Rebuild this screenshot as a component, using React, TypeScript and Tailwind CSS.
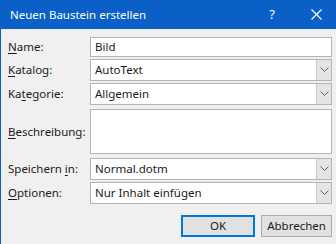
import React from "react";

const font = { fontFamily: '"Noto Sans", "Open Sans", sans-serif' };

function Label({ pre, u, post }: { pre: string; u: string; post: string }) {
  return (
    <div className="w-[82px] shrink-0 text-[11.5px] text-[#1a1a1a]">
      {pre}
      <span className="underline underline-offset-2">{u}</span>
      {post}
    </div>
  );
}

function Chevron() {
  return (
    <svg width="9" height="6" viewBox="0 0 9 6">
      <path d="M0.5 0.5 L4.5 4.5 L8.5 0.5" fill="none" stroke="#606060" strokeWidth="1" />
    </svg>
  );
}

function Combo({ value }: { value: string }) {
  return (
    <div className="flex h-[22px] flex-1 items-stretch border border-[#b4b4b4] bg-white">
      <div className="flex flex-1 items-center pl-[4px] text-[11.5px] text-[#1a1a1a]">{value}</div>
      <div className="flex w-[15px] items-center justify-center border-l border-[#c8c8c8] bg-[#e4e4e4]">
        <Chevron />
      </div>
    </div>
  );
}

export default function App() {
  return (
    <div className="flex h-[244px] w-[336px] flex-col overflow-hidden bg-[#f0f0f0]" style={font}>
      <div className="flex h-[29px] shrink-0 items-center bg-[#0a60c6] pl-[10px] pr-[14px] text-white">
        <div className="flex-1 text-[11.5px]">Neuen Baustein erstellen</div>
        <div className="mr-[36px] text-[13px]">?</div>
        <svg width="11" height="11" viewBox="0 0 11 11">
          <path d="M0.5 0.5 L10.5 10.5 M10.5 0.5 L0.5 10.5" stroke="white" strokeWidth="1.2" />
        </svg>
      </div>

      <div className="flex flex-1 flex-col border-l border-[#0a60c6] pl-[7px] pr-[4px]">
        <div className="mt-[8px] flex items-center">
          <Label pre="" u="N" post="ame:" />
          <div className="flex h-[20px] flex-1 items-center border border-[#b4b4b4] bg-white pl-[4px] text-[11.5px] text-[#1a1a1a]">
            Bild
          </div>
        </div>

        <div className="mt-[2px] flex items-center">
          <Label pre="" u="K" post="atalog:" />
          <Combo value="AutoText" />
        </div>

        <div className="mt-[2px] flex items-center">
          <Label pre="Ka" u="t" post="egorie:" />
          <Combo value="Allgemein" />
        </div>

        <div className="mt-[4px] flex items-center">
          <Label pre="" u="B" post="eschreibung:" />
          <div className="h-[45px] flex-1 border border-[#b4b4b4] bg-white" />
        </div>

        <div className="mt-[4px] flex items-center">
          <Label pre="Speichern " u="i" post="n:" />
          <Combo value="Normal.dotm" />
        </div>

        <div className="mt-[2px] flex items-center">
          <Label pre="" u="O" post="ptionen:" />
          <Combo value="Nur Inhalt einfügen" />
        </div>

        <div className="mt-[11px] flex justify-end gap-[6px]">
          <button className="flex h-[22px] w-[74px] items-center justify-center border-2 border-[#0078d7] bg-[#e1e1e1] text-[11.5px] text-[#1a1a1a]">
            OK
          </button>
          <button className="flex h-[22px] w-[71px] items-center justify-center border border-[#adadad] bg-[#e1e1e1] text-[11.5px] text-[#1a1a1a]">
            Abbrechen
          </button>
        </div>
      </div>
    </div>
  );
}
